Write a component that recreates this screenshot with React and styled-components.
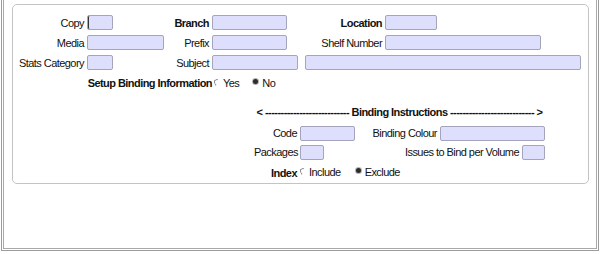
import React from 'react';
import styled, { createGlobalStyle } from 'styled-components';

const Global = createGlobalStyle`
  html, body { margin: 0; padding: 0; background: #fff; }
  body {
    font-family: "Liberation Sans", Arial, sans-serif;
    font-size: 11px;
    letter-spacing: -0.55px;
    color: #111;
  }
`;

const Window = styled.div`
  box-sizing: border-box;
  width: 598px;
  height: 251px;
  margin-left: 1px;
  border: 1px solid #9c9c9c;
  border-top: none;
  padding: 0 1px 1px 1px;
`;

const Pane = styled.div`
  box-sizing: border-box;
  height: 100%;
  border: 1px solid #a9a9a9;
  border-top: none;
  padding: 4px 0 0 8px;
`;

const Group = styled.div`
  box-sizing: border-box;
  width: 577px;
  height: 180px;
  border: 1px solid #c4c4c4;
  border-radius: 5px;
  padding-top: 7px;
`;

const TopGrid = styled.div`
  display: grid;
  grid-template-columns: 74px 78px 47px 88px 85px 1fr;
  grid-auto-rows: 20px;
  align-items: start;
`;

const Label = styled.span`
  display: block;
  text-align: right;
  white-space: nowrap;
  padding-right: 3px;
  padding-top: 4px;
  line-height: 15px;
  font-weight: ${p => (p.$bold ? 700 : 400)};
`;

const Field = styled.input`
  display: block;
  box-sizing: border-box;
  width: ${p => p.$w}px;
  height: 15px;
  margin: ${p => p.$top ?? 3}px 0 0 ${p => p.$left ?? 0}px;
  padding: 0;
  border: 1px solid #a4a4bc;
  border-radius: 2px;
  background: #dedefd;
  box-shadow: ${p => (p.$caret ? 'inset 1px 0 0 #333' : 'none')};
  outline: none;
  grid-column: ${p => p.$span || 'auto'};
`;

const RadioRow = styled.div`
  display: flex;
  align-items: flex-start;
  height: 20px;
  margin-top: 1px;
  line-height: 20px;
`;

const RowLabel = styled.span`
  width: 199px;
  text-align: right;
  padding-right: 1px;
  font-weight: 700;
  white-space: nowrap;
`;

const Options = styled.div`
  display: flex;
  align-items: flex-start;
  gap: ${p => p.$gap}px;
  margin-left: ${p => p.$left || 0}px;
`;

const Option = styled.label`
  display: flex;
  align-items: flex-start;
  line-height: 20px;
  white-space: nowrap;
`;

const Radio = styled.span`
  display: block;
  box-sizing: border-box;
  margin-top: 6px;
  margin-right: 3px;
  border-radius: 50%;
  ${p =>
    p.$on
      ? `width: 5px; height: 5px; background: #2c2c2c; box-shadow: 0 0 0 1px #b4b4b4; margin-left: 1px; margin-right: 4px;`
      : `width: 6px; height: 7px; border: 1px solid; border-color: #8c8c8c transparent transparent #8c8c8c; transform: rotate(-20deg);`}
`;

const BindGrid = styled.div`
  display: grid;
  grid-template-columns: 46px 245px;
  grid-template-rows: 20px 19px 21px 20px;
  margin: 9px 0 0 241px;
  width: 291px;
`;

const Title = styled.div`
  grid-column: 1 / -1;
  display: flex;
  justify-content: center;
  font-weight: 700;
  line-height: 20px;
  white-space: pre;
`;

const Cell = styled.div`
  display: flex;
  align-items: flex-start;
  justify-content: space-between;
`;

const Pair = styled.div`
  display: flex;
  align-items: flex-start;
`;

const IndexLabel = styled.span`
  display: block;
  text-align: right;
  padding-right: 3px;
  font-weight: 700;
  line-height: 20px;
  margin-top: 1px;
`;

const dashes = '-'.repeat(27);

export default function App() {
  return (
    <>
      <Global />
      <Window>
        <Pane>
          <Group>
            <TopGrid>
              <Label>Copy</Label>
              <Field $w={26} $caret readOnly />
              <Label $bold>Branch</Label>
              <Field $w={75} readOnly />
              <Label $bold>Location</Label>
              <Field $w={52} readOnly />

              <Label>Media</Label>
              <Field $w={77} readOnly />
              <Label>Prefix</Label>
              <Field $w={75} readOnly />
              <Label>Shelf Number</Label>
              <Field $w={156} readOnly />

              <Label>Stats Category</Label>
              <Field $w={26} readOnly />
              <Label>Subject</Label>
              <Field $w={86} readOnly />
              <Field $w={276} $left={5} $span="5 / 7" readOnly />
            </TopGrid>

            <RadioRow>
              <RowLabel>Setup Binding Information</RowLabel>
              <Options $gap={13} $left={1}>
                <Option><Radio />Yes</Option>
                <Option><Radio $on />No</Option>
              </Options>
            </RadioRow>

            <BindGrid>
              <Title>{`< ${dashes} Binding Instructions ${dashes} >`}</Title>

              <Label>Code</Label>
              <Cell>
                <Field $w={55} $top={4} readOnly />
                <Pair>
                  <Label>Binding Colour</Label>
                  <Field $w={105} $top={4} readOnly />
                </Pair>
              </Cell>

              <Label>Packages</Label>
              <Cell>
                <Field $w={24} $top={4} readOnly />
                <Pair>
                  <Label>Issues to Bind per Volume</Label>
                  <Field $w={23} $top={4} readOnly />
                </Pair>
              </Cell>

              <IndexLabel>Index</IndexLabel>
              <Options $gap={14}>
                <Option><Radio />Include</Option>
                <Option><Radio $on />Exclude</Option>
              </Options>
            </BindGrid>
          </Group>
        </Pane>
      </Window>
    </>
  );
}
